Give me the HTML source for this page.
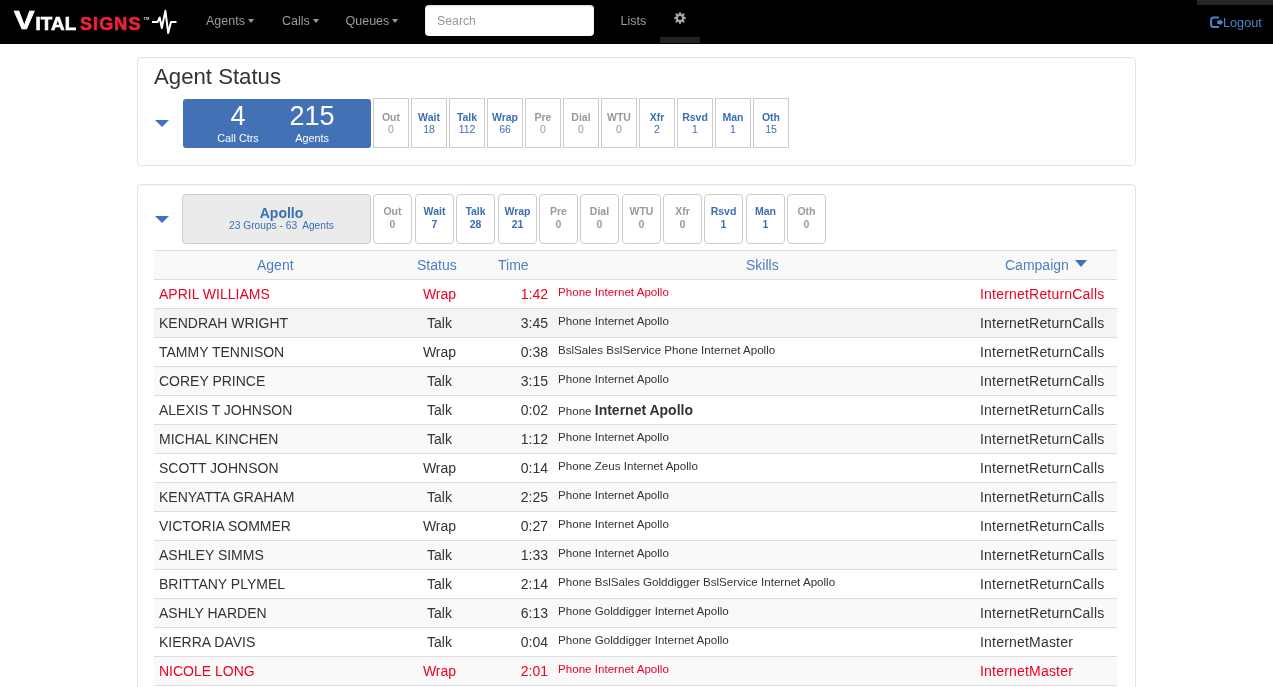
<!DOCTYPE html>
<html><head><meta charset="utf-8">
<style>
*{box-sizing:border-box}
html,body{margin:0;padding:0;width:1273px;height:687px;overflow:hidden;background:#fff;}
body > *{will-change:transform}
body{font-family:"Liberation Sans",sans-serif;color:#333}
.abs{position:absolute}
#nav{position:absolute;left:0;top:0;width:1273px;height:44px;background:#000}
.logo{position:absolute;top:0;height:44px;white-space:nowrap}
.navl{position:absolute;top:10.5px;line-height:20px;font-size:12.5px;color:#9d9d9d;white-space:nowrap}
.caret{display:inline-block;width:0;height:0;border-left:3.5px solid transparent;border-right:3.5px solid transparent;border-top:4px solid #9d9d9d;vertical-align:middle;margin-left:3px;position:relative;top:0px}
#search{position:absolute;left:425px;top:5px;width:169px;height:31px;background:#fff;border-radius:4px;box-shadow:inset 0 1px 2px rgba(0,0,0,.15);font-size:12.3px;color:#999;padding-left:12px;line-height:33px}
.panel{position:absolute;left:137px;width:999px;border:1px solid #e3e3e3;border-radius:4px;background:#fff;box-shadow:inset 0 1px 1px rgba(0,0,0,.03)}
.tri{position:absolute;width:0;height:0;border-left:7px solid transparent;border-right:7px solid transparent;border-top:7px solid #3f73b6}
.bigbox{position:absolute;left:183px;top:98.7px;width:187.6px;height:48.6px;background:#4272b5;border-radius:3px;color:#fff;text-align:center}
.bigbox .num{position:absolute;top:0px;font-size:27px;line-height:34px}
.bigbox .lab{position:absolute;top:32px;font-size:10.8px;line-height:14px}
.sb{position:absolute;top:98px;width:36px;height:50px;border:1px solid #ccc;text-align:center;color:#999;font-size:10.5px}
.sb .l{position:absolute;left:0;right:0;top:11px;line-height:14px;font-weight:bold}
.sb .n{position:absolute;left:0;right:0;top:23px;line-height:14px}
.sb.act{color:#3a6fb3}
.gbox{position:absolute;left:182px;top:194px;width:189px;height:50px;background:#ebebeb;border:1px solid #ccc;border-radius:4px;text-align:center;color:#3a6fb3}
.gb{position:absolute;top:194px;width:39px;height:50px;border:1px solid #ccc;border-radius:4px;text-align:center;color:#999;font-size:10.5px;font-weight:bold}
.gb .l{position:absolute;left:0;right:0;top:9px;line-height:14px}
.gb .n{position:absolute;left:0;right:0;top:22px;line-height:14px}
.gb.act{color:#3a6fb3}
.thead{position:absolute;left:154px;top:250px;width:963px;height:30px;background:#f9f9f9;border-top:1px solid #ddd;border-bottom:1px solid #ddd}
.th{position:absolute;top:0;line-height:28px;font-size:14px;color:#4a7fbf;white-space:nowrap}
.row{position:absolute;left:154px;width:963px;height:29px;border-bottom:1px solid #ddd;font-size:14px;color:#333;white-space:nowrap}
.row.odd{background:#f9f9f9}
.row.hov{background:#f4f4f4}
.row.red{color:#ee0022}
.row > div{position:absolute;top:0}
.nm{left:5px;line-height:28px}
.st{left:245.5px;width:80px;text-align:center;line-height:28px}
.tm{left:339px;width:55px;text-align:right;line-height:28px}
.sk{left:404px;font-size:11.6px;line-height:16px;top:4px !important}
.skb{line-height:20px;top:4px !important}
.skb b{font-size:14px}
.cp{left:826px;line-height:28px;letter-spacing:0.2px}
</style></head><body>
<div id="nav">
  <div class="logo" style="left:0">
    <span class="abs" style="left:13.5px;top:5.2px;font-size:26px;line-height:30px;font-weight:bold;color:#fff;transform:scaleX(1.18);transform-origin:left;-webkit-text-stroke:0.7px #fff">V</span>
    <span class="abs" style="left:35.5px;top:12.6px;font-size:18.8px;line-height:22px;font-weight:bold;color:#fff;letter-spacing:0.1px;-webkit-text-stroke:0.7px #fff">ITAL</span>
    <span class="abs" style="left:80px;top:13px;font-size:18px;line-height:22px;font-weight:bold;color:#e8233a;letter-spacing:1.1px;-webkit-text-stroke:0.7px #e8233a">SIGNS</span>
    <span class="abs" style="left:143.5px;top:16px;font-size:4px;line-height:5px;font-weight:bold;color:#ddd">TM</span>
    <svg class="abs" style="left:150px;top:8px" width="30" height="28" viewBox="150 8 30 28">
      <polyline points="152,22 157.5,22 159.7,17.5 161.8,28 165.4,10.8 168.2,33 171,22 176.5,22" fill="none" stroke="#fff" stroke-width="2" stroke-linejoin="round"/>
    </svg>
  </div>
  <div class="navl" style="left:206px">Agents<span class="caret"></span></div>
  <div class="navl" style="left:282px">Calls<span class="caret"></span></div>
  <div class="navl" style="left:345.5px">Queues<span class="caret"></span></div>
  <div id="search">Search</div>
  <div class="navl" style="left:620.5px">Lists</div>
  <svg class="abs" style="left:673.2px;top:10.5px" width="14" height="14" viewBox="0 0 14 14"><path fill="#a3a3a3" fill-rule="evenodd" d="M5.47 3.30 L6.47 0.92 L7.53 0.92 L8.53 3.30 L10.92 2.33 L11.67 3.08 L10.70 5.47 L13.08 6.47 L13.08 7.53 L10.70 8.53 L11.67 10.92 L10.92 11.67 L8.53 10.70 L7.53 13.08 L6.47 13.08 L5.47 10.70 L3.08 11.67 L2.33 10.92 L3.30 8.53 L0.92 7.53 L0.92 6.47 L3.30 5.47 L2.33 3.08 L3.08 2.33Z M9.0 7 A2.0 2.0 0 1 0 5.0 7 A2.0 2.0 0 1 0 9.0 7Z"/></svg>
  <div class="abs" style="left:660px;top:37px;width:40px;height:6px;background:#222"></div>
  <div class="abs" style="left:1197px;top:0;width:76px;height:5px;background:#252525"></div>
  <svg class="abs" style="left:1210px;top:16px;display:block" width="14" height="13" viewBox="0 0 14 13"><path d="M8.8 1.4H3.6Q1.1 1.4 1.1 3.9v4.5Q1.1 10.9 3.6 10.9H8.8" fill="none" stroke="#4a86c8" stroke-width="2"/><path d="M7.2 4.6h2.6V3.1L13.3 6.3 9.8 9.5V8H7.2z" fill="#4a86c8"/></svg>
  <div class="navl" style="left:1223px;top:12.6px;font-size:12.7px;color:#4a86c8">Logout</div>
</div>

<div class="panel" style="top:57px;height:109px"></div>
<div class="abs" style="left:154px;top:64.1px;font-size:22.2px;line-height:26px;color:#333">Agent Status</div>
<div class="tri" style="left:154.5px;top:120px"></div>
<div class="bigbox">
  <div class="num" style="left:0;width:110px">4</div>
  <div class="lab" style="left:0;width:110px">Call Ctrs</div>
  <div class="num" style="left:100px;width:58px">215</div>
  <div class="lab" style="left:100px;width:58px">Agents</div>
</div>
<div class="sb" style="left:373px"><div class="l">Out</div><div class="n">0</div></div>
<div class="sb act" style="left:411px"><div class="l">Wait</div><div class="n">18</div></div>
<div class="sb act" style="left:449px"><div class="l">Talk</div><div class="n">112</div></div>
<div class="sb act" style="left:487px"><div class="l">Wrap</div><div class="n">66</div></div>
<div class="sb" style="left:525px"><div class="l">Pre</div><div class="n">0</div></div>
<div class="sb" style="left:563px"><div class="l">Dial</div><div class="n">0</div></div>
<div class="sb" style="left:601px"><div class="l">WTU</div><div class="n">0</div></div>
<div class="sb act" style="left:639px"><div class="l">Xfr</div><div class="n">2</div></div>
<div class="sb act" style="left:677px"><div class="l">Rsvd</div><div class="n">1</div></div>
<div class="sb act" style="left:715px"><div class="l">Man</div><div class="n">1</div></div>
<div class="sb act" style="left:753px"><div class="l">Oth</div><div class="n">15</div></div>


<div class="panel" style="top:184px;height:520px"></div>
<div class="tri" style="left:154.5px;top:216px"></div>
<div class="gbox">
  <div class="abs" style="left:10px;right:0;top:9px;font-size:14px;line-height:18px;font-weight:bold">Apollo</div>
  <div class="abs" style="left:10px;right:0;top:24px;font-size:10.2px;line-height:14px">23 Groups - 63&nbsp; Agents</div>
</div>
<div class="gb" style="left:373.40px"><div class="l">Out</div><div class="n">0</div></div>
<div class="gb act" style="left:414.78px"><div class="l">Wait</div><div class="n">7</div></div>
<div class="gb act" style="left:456.16px"><div class="l">Talk</div><div class="n">28</div></div>
<div class="gb act" style="left:497.54px"><div class="l">Wrap</div><div class="n">21</div></div>
<div class="gb" style="left:538.92px"><div class="l">Pre</div><div class="n">0</div></div>
<div class="gb" style="left:580.30px"><div class="l">Dial</div><div class="n">0</div></div>
<div class="gb" style="left:621.68px"><div class="l">WTU</div><div class="n">0</div></div>
<div class="gb" style="left:663.06px"><div class="l">Xfr</div><div class="n">0</div></div>
<div class="gb act" style="left:704.44px"><div class="l">Rsvd</div><div class="n">1</div></div>
<div class="gb act" style="left:745.82px"><div class="l">Man</div><div class="n">1</div></div>
<div class="gb" style="left:787.20px"><div class="l">Oth</div><div class="n">0</div></div>

<div class="thead">
  <div class="th" style="left:103px">Agent</div>
  <div class="th" style="left:263px">Status</div>
  <div class="th" style="left:344px">Time</div>
  <div class="th" style="left:592px">Skills</div>
  <div class="th" style="left:851px">Campaign <span style="display:inline-block;width:0;height:0;border-left:6.6px solid transparent;border-right:6.6px solid transparent;border-top:7px solid #3f73b6;vertical-align:middle;position:relative;top:-3px;left:2px"></span></div>
</div>
<div class="row red" style="top:280px"><div class="nm">APRIL WILLIAMS</div><div class="st">Wrap</div><div class="tm">1:42</div><div class="sk">Phone Internet Apollo</div><div class="cp">InternetReturnCalls</div></div>
<div class="row odd hov" style="top:309px"><div class="nm">KENDRAH WRIGHT</div><div class="st">Talk</div><div class="tm">3:45</div><div class="sk">Phone Internet Apollo</div><div class="cp">InternetReturnCalls</div></div>
<div class="row" style="top:338px"><div class="nm">TAMMY TENNISON</div><div class="st">Wrap</div><div class="tm">0:38</div><div class="sk">BslSales BslService Phone Internet Apollo</div><div class="cp">InternetReturnCalls</div></div>
<div class="row odd" style="top:367px"><div class="nm">COREY PRINCE</div><div class="st">Talk</div><div class="tm">3:15</div><div class="sk">Phone Internet Apollo</div><div class="cp">InternetReturnCalls</div></div>
<div class="row" style="top:396px"><div class="nm">ALEXIS T JOHNSON</div><div class="st">Talk</div><div class="tm">0:02</div><div class="sk skb">Phone <b>Internet Apollo</b></div><div class="cp">InternetReturnCalls</div></div>
<div class="row odd" style="top:425px"><div class="nm">MICHAL KINCHEN</div><div class="st">Talk</div><div class="tm">1:12</div><div class="sk">Phone Internet Apollo</div><div class="cp">InternetReturnCalls</div></div>
<div class="row" style="top:454px"><div class="nm">SCOTT JOHNSON</div><div class="st">Wrap</div><div class="tm">0:14</div><div class="sk">Phone Zeus Internet Apollo</div><div class="cp">InternetReturnCalls</div></div>
<div class="row odd" style="top:483px"><div class="nm">KENYATTA GRAHAM</div><div class="st">Talk</div><div class="tm">2:25</div><div class="sk">Phone Internet Apollo</div><div class="cp">InternetReturnCalls</div></div>
<div class="row" style="top:512px"><div class="nm">VICTORIA SOMMER</div><div class="st">Wrap</div><div class="tm">0:27</div><div class="sk">Phone Internet Apollo</div><div class="cp">InternetReturnCalls</div></div>
<div class="row odd" style="top:541px"><div class="nm">ASHLEY SIMMS</div><div class="st">Talk</div><div class="tm">1:33</div><div class="sk">Phone Internet Apollo</div><div class="cp">InternetReturnCalls</div></div>
<div class="row" style="top:570px"><div class="nm">BRITTANY PLYMEL</div><div class="st">Talk</div><div class="tm">2:14</div><div class="sk">Phone BslSales Golddigger BslService Internet Apollo</div><div class="cp">InternetReturnCalls</div></div>
<div class="row odd" style="top:599px"><div class="nm">ASHLY HARDEN</div><div class="st">Talk</div><div class="tm">6:13</div><div class="sk">Phone Golddigger Internet Apollo</div><div class="cp">InternetReturnCalls</div></div>
<div class="row" style="top:628px"><div class="nm">KIERRA DAVIS</div><div class="st">Talk</div><div class="tm">0:04</div><div class="sk">Phone Golddigger Internet Apollo</div><div class="cp">InternetMaster</div></div>
<div class="row odd red" style="top:657px"><div class="nm">NICOLE LONG</div><div class="st">Wrap</div><div class="tm">2:01</div><div class="sk">Phone Internet Apollo</div><div class="cp">InternetMaster</div></div>

</body></html>
